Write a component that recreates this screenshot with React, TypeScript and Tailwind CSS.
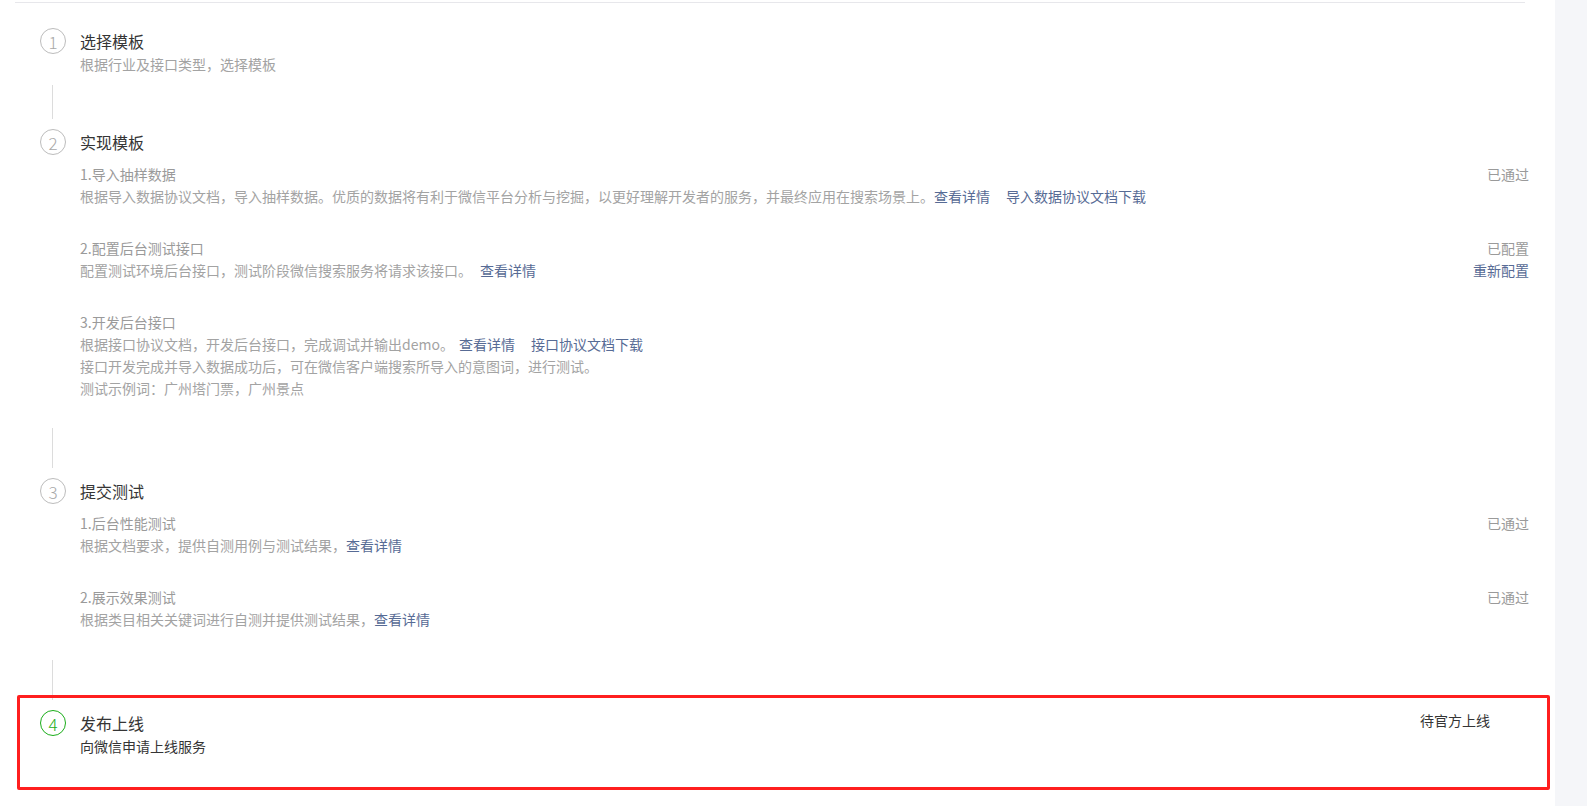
import React from 'react';

interface SubItem {
  title: string;
  lines: React.ReactNode[];
  status?: string[];
}

const Link = ({ children, className = '' }: { children: React.ReactNode; className?: string }) => (
  <a className={`text-[#576b95] cursor-pointer ${className}`}>{children}</a>
);

const Circle = ({ n, active }: { n: number; active?: boolean }) => (
  <div
    className={`w-[26px] h-[26px] -my-[1px] rounded-full border flex items-center justify-center text-[17px] leading-none font-light ${
      active ? 'border-[#1aad19] text-[#1aad19]' : 'border-[#bcbcbc] text-[#a8a8a8]'
    }`}
  >
    {n}
  </div>
);

const Connector = ({ top, height }: { top: string; height: string }) => (
  <div className={`ml-[37px] border-l border-[#dcdcdc] ${top} ${height}`} />
);

const StepHeader = ({ n, title, active }: { n: number; title: string; active?: boolean }) => (
  <div className="flex items-center h-[24px] pl-[25px]">
    <Circle n={n} active={active} />
    <span className="ml-[14px] text-[16px] leading-[24px] text-[#353535]">{title}</span>
  </div>
);

const ItemList = ({ items }: { items: SubItem[] }) => (
  <div className="pl-[65px] mt-[9px] flex flex-col gap-[30px]">
    {items.map((item) => (
      <div key={item.title} className="flex justify-between text-[14px] leading-[22px]">
        <div>
          <div className="text-[#9a9a9a]">{item.title}</div>
          {item.lines.map((l, i) => (
            <div key={i} className="text-[#a3a3a3]">
              {l}
            </div>
          ))}
        </div>
        {item.status && (
          <div className="text-right text-[#9a9a9a]">
            {item.status.map((s) =>
              s === '重新配置' ? (
                <div key={s}>
                  <Link>{s}</Link>
                </div>
              ) : (
                <div key={s}>{s}</div>
              )
            )}
          </div>
        )}
      </div>
    ))}
  </div>
);

const implementItems: SubItem[] = [
  {
    title: '1.导入抽样数据',
    lines: [
      <>
        根据导入数据协议文档，导入抽样数据。优质的数据将有利于微信平台分析与挖掘，以更好理解开发者的服务，并最终应用在搜索场景上。
        <Link>查看详情</Link>
        <Link className="ml-[16px]">导入数据协议文档下载</Link>
      </>,
    ],
    status: ['已通过'],
  },
  {
    title: '2.配置后台测试接口',
    lines: [
      <>
        配置测试环境后台接口，测试阶段微信搜索服务将请求该接口。
        <Link className="ml-[8px]">查看详情</Link>
      </>,
    ],
    status: ['已配置', '重新配置'],
  },
  {
    title: '3.开发后台接口',
    lines: [
      <>
        根据接口协议文档，开发后台接口，完成调试并输出demo。
        <Link className="ml-[5px]">查看详情</Link>
        <Link className="ml-[16px]">接口协议文档下载</Link>
      </>,
      '接口开发完成并导入数据成功后，可在微信客户端搜索所导入的意图词，进行测试。',
      '测试示例词：广州塔门票，广州景点',
    ],
  },
];

const testItems: SubItem[] = [
  {
    title: '1.后台性能测试',
    lines: [
      <>
        根据文档要求，提供自测用例与测试结果，<Link>查看详情</Link>
      </>,
    ],
    status: ['已通过'],
  },
  {
    title: '2.展示效果测试',
    lines: [
      <>
        根据类目相关关键词进行自测并提供测试结果，<Link>查看详情</Link>
      </>,
    ],
    status: ['已通过'],
  },
];

export default function App() {
  return (
    <div className="flex h-screen w-full bg-white font-['Noto_Sans_CJK_SC',sans-serif] overflow-hidden">
      <div className="w-[1555px] pl-[15px]">
        <div className="mt-[2px] w-[1510px] border-t border-[#e7e7eb]" />

        <div className="w-[1514px]">
          {/* step 1 */}
          <div className="pt-[26px]">
            <StepHeader n={1} title="选择模板" />
            <div className="pl-[65px] text-[14px] leading-[22px] text-[#a3a3a3]">
              根据行业及接口类型，选择模板
            </div>
          </div>

          <Connector top="mt-[10px]" height="h-[34px]" />

          {/* step 2 */}
          <div className="mt-[11px]">
            <StepHeader n={2} title="实现模板" />
            <ItemList items={implementItems} />
          </div>

          <Connector top="mt-[29px]" height="h-[40px]" />

          {/* step 3 */}
          <div className="mt-[11px]">
            <StepHeader n={3} title="提交测试" />
            <ItemList items={testItems} />
          </div>

          <Connector top="mt-[30px]" height="h-[40px]" />
        </div>

        {/* step 4 */}
        <div className="-mt-[5px] ml-[2px] w-[1533px] border-[3px] border-[#ff1f1f] rounded-[2px] pt-[13px] pb-[30px] pr-[57px]">
          <div className="flex justify-between">
            <div>
              <div className="flex items-center h-[24px] pl-[20px]">
                <Circle n={4} active />
                <span className="ml-[14px] text-[16px] leading-[24px] text-[#353535]">发布上线</span>
              </div>
              <div className="pl-[60px] text-[14px] leading-[22px] text-[#353535]">向微信申请上线服务</div>
            </div>
            <div className="text-[14px] leading-[18px] text-[#353535]">待官方上线</div>
          </div>
        </div>
      </div>
      <div className="flex-1 bg-[#f5f6f9]" />
    </div>
  );
}
